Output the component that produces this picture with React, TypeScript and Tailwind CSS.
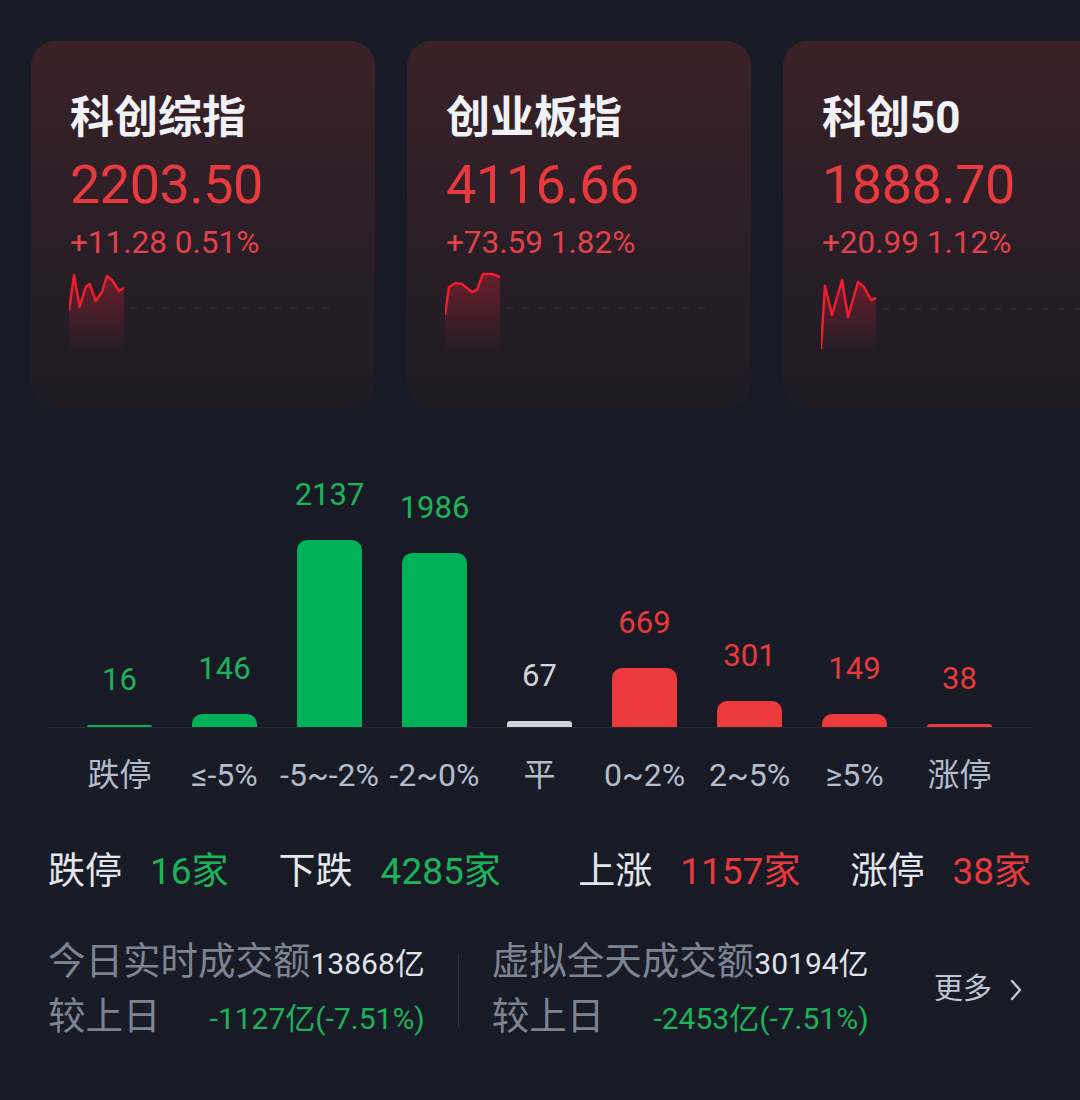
import React from 'react';

type Pt = [number, number];

const cards: {
  name: string;
  price: string;
  change: string;
  line: Pt[];
  dashY: number;
}[] = [
  {
    name: '科创综指',
    price: '2203.50',
    change: '+11.28 0.51%',
    line: [[0, 42], [5, 6], [10.7, 38], [16.7, 18], [20.7, 15], [26.7, 32], [33, 23], [38, 7], [43, 11], [50, 22], [55, 19]],
    dashY: 39,
  },
  {
    name: '创业板指',
    price: '4116.66',
    change: '+73.59 1.82%',
    line: [[0, 46], [4, 18], [10.7, 14], [17, 15], [27, 23], [32, 21], [38, 5], [47, 5], [55, 8]],
    dashY: 39,
  },
  {
    name: '科创50',
    price: '1888.70',
    change: '+20.99 1.12%',
    line: [[0, 80], [4, 17], [11, 46], [21, 11], [27, 48], [37, 13], [43, 18], [50, 31], [55, 29]],
    dashY: 40,
  },
];

const bars = [
  { label: '跌停', value: 16, tone: 'down' },
  { label: '≤-5%', value: 146, tone: 'down' },
  { label: '-5~-2%', value: 2137, tone: 'down' },
  { label: '-2~0%', value: 1986, tone: 'down' },
  { label: '平', value: 67, tone: 'flat' },
  { label: '0~2%', value: 669, tone: 'up' },
  { label: '2~5%', value: 301, tone: 'up' },
  { label: '≥5%', value: 149, tone: 'up' },
  { label: '涨停', value: 38, tone: 'up' },
];

const barColor: Record<string, string> = {
  down: 'bg-[#00b15a]',
  flat: 'bg-[#d2d2d4]',
  up: 'bg-[#ec3a3c]',
};

const textColor: Record<string, string> = {
  down: 'text-[#1db35b]',
  flat: 'text-[#d2d4d8]',
  up: 'text-[#e8393e]',
};

function Sparkline({ line, dashY, id }: { line: Pt[]; dashY: number; id: string }) {
  const pts = line.map(([x, y]) => `${x},${y}`).join(' ');
  const first = line[0][0];
  const last = line[line.length - 1][0];
  const area = `${pts} ${last},85 ${first},85`;
  return (
    <svg width="265" height="90" viewBox="0 0 265 90" className="block -ml-[1px]">
      <defs>
        <linearGradient id={id} x1="0" y1="0" x2="0" y2="1">
          <stop offset="0%" stopColor="#e01e34" stopOpacity="0.35" />
          <stop offset="100%" stopColor="#e01e34" stopOpacity="0" />
        </linearGradient>
      </defs>
      <line x1={last + 6} y1={dashY} x2="265" y2={dashY} stroke="#342d36" strokeWidth="1.5" strokeDasharray="7 9" />
      <polygon points={area} fill={`url(#${id})`} />
      <polyline points={pts} fill="none" stroke="#f21c30" strokeWidth="2.5" strokeLinejoin="round" />
    </svg>
  );
}

function IndexCard({ card, idx }: { card: (typeof cards)[number]; idx: number }) {
  return (
    <div className="w-[344px] h-[369px] shrink-0 rounded-[25px] bg-gradient-to-b from-[#3b2128] to-[#1c1b24] pl-[39px] pt-[55px]">
      <div className="text-[44px] leading-none font-bold text-[#f0f2f5]">{card.name}</div>
      <div className="mt-[18px] text-[54px] leading-none text-[#e8393e] tracking-[-0.5px]">{card.price}</div>
      <div className="mt-[15px] text-[31.5px] leading-none text-[#e2404a]">{card.change}</div>
      <div className="mt-[10px]">
        <Sparkline line={card.line} dashY={card.dashY} id={`spark-${idx}`} />
      </div>
    </div>
  );
}

function Stat({ label, value, tone }: { label: string; value: string; tone: string }) {
  return (
    <div className="flex items-baseline gap-[28px]">
      <span className="text-[#e4e6ec]">{label}</span>
      <span className={textColor[tone]}>{value}</span>
    </div>
  );
}

function Turnover({ title, amount, diff }: { title: string; amount: string; diff: string }) {
  return (
    <div className="flex flex-col">
      <div className="flex items-baseline leading-[52px]">
        <span className="text-[37.5px] text-[#7c8494]">{title}</span>
        <span className="text-[30px] text-[#dfe2e8]">{amount}</span>
      </div>
      <div className="flex items-baseline justify-between leading-[52px]">
        <span className="text-[37.5px] text-[#7c8494]">较上日</span>
        <span className="text-[30px] text-[#1db35b]">{diff}</span>
      </div>
    </div>
  );
}

export default function App() {
  const scale = 187 / 2137;
  return (
    <div className="w-full min-h-[1100px] bg-[#181b25] overflow-hidden font-[Roboto,'Noto_Sans_CJK_SC',sans-serif]">
      {/* index cards */}
      <div className="flex gap-[32px] pl-[31px] pt-[41px]">
        {cards.map((c, i) => (
          <IndexCard key={c.name} card={c} idx={i} />
        ))}
      </div>

      {/* distribution chart */}
      <div className="ml-[47px] w-[985px] mt-[58px]">
        <div className="flex px-[20px] h-[260px] border-b border-[#252933]">
          {bars.map((b) => (
            <div key={b.label} className="w-[105px] flex flex-col items-center justify-end">
              <div className={`text-[31px] leading-none mb-[30px] ${textColor[b.tone]}`}>{b.value}</div>
              <div
                className={`w-[65px] ${b.value > 100 ? 'rounded-t-[10px]' : 'rounded-t-[3px]'} ${barColor[b.tone]}`}
                style={{ height: Math.max(2, Math.round(b.value * scale)) }}
              />
            </div>
          ))}
        </div>
        <div className="flex px-[20px] mt-[31px]">
          {bars.map((b) => (
            <div key={b.label} className="w-[105px] flex justify-center text-[32px] leading-none text-[#b4bccb] whitespace-nowrap">
              {b.label}
            </div>
          ))}
        </div>
      </div>

      {/* summary */}
      <div className="flex justify-between pl-[48px] pr-[49px] mt-[62px] text-[37px] leading-none">
        <div className="flex gap-[50px]">
          <Stat label="跌停" value="16家" tone="down" />
          <Stat label="下跌" value="4285家" tone="down" />
        </div>
        <div className="flex gap-[50px]">
          <Stat label="上涨" value="1157家" tone="up" />
          <Stat label="涨停" value="38家" tone="up" />
        </div>
      </div>

      {/* turnover */}
      <div className="flex items-center pl-[48px] pr-[58px] mt-[45px]">
        <Turnover title="今日实时成交额" amount="13868亿" diff="-1127亿(-7.51%)" />
        <div className="w-px h-[73px] bg-[#2e323c] mx-[33px]" />
        <Turnover title="虚拟全天成交额" amount="30194亿" diff="-2453亿(-7.51%)" />
        <div className="ml-auto flex items-center gap-[18px] text-[29px] text-[#c0c6d2]">
          <span>更多</span>
          <svg width="12" height="22" viewBox="0 0 12 22" fill="none">
            <path d="M2 2 L10 11 L2 20" stroke="#c0c6d2" strokeWidth="2.4" strokeLinecap="round" strokeLinejoin="round" />
          </svg>
        </div>
      </div>
    </div>
  );
}
